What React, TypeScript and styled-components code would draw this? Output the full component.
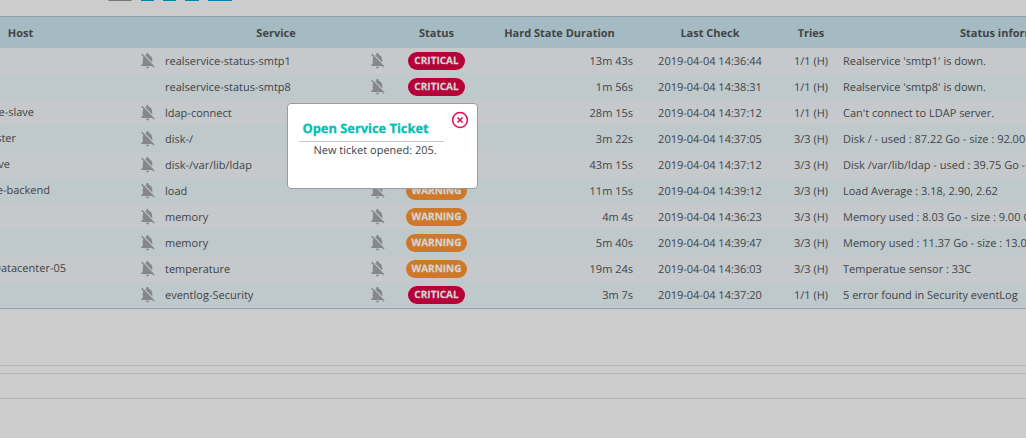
import React from "react";
import styled, { createGlobalStyle } from "styled-components";

const GlobalStyle = createGlobalStyle`
  * { box-sizing: border-box; }
  body {
    margin: 0;
    background: #cccccc;
    font-family: "Open Sans", sans-serif;
    font-size: 11px;
    color: #424446;
    overflow: hidden;
    text-rendering: geometricPrecision;
  }
`;

const Page = styled.div`
  width: 1026px;
  height: 438px;
  overflow: hidden;
`;

const LogoStrip = styled.div`
  height: 16px;
  padding-left: 107.5px;
`;

const Table = styled.div`
  border-top: 1px solid #8ea3b1;
  border-bottom: 1px solid #8ea3b4;
`;

const Row = styled.div`
  display: grid;
  grid-template-columns: 138px 20px 236px 85px 161px 140px 62px 1fr;
  align-items: center;
  height: 26px;
  background: #c5c9cc;
  white-space: nowrap;
  &:nth-child(odd) { background: #bfc8cb; }
`;

const HeaderRow = styled(Row)`
  height: 31px;
  padding-top: 1px;
  font-weight: 700;
  text-align: center;
  &:nth-child(odd) { background: #a4bbc3; }
`;

const HostHeader = styled.span`
  width: 41px;
`;

const InfoHeader = styled.span`
  padding-left: 118px;
  text-align: left;
`;

const Cell = styled.span`
  padding-top: 1px;
  line-height: 15px;
`;

const HostCell = styled(Cell)<{ $width: number }>`
  display: flex;
  justify-content: flex-end;
  width: ${(p) => p.$width}px;
  padding: 0 0 1px;
  overflow: hidden;
`;

const BellSvg = styled.svg`
  display: block;
  width: 19px;
  height: 19px;
  margin-bottom: 1px;
  fill: #85878a;
`;

const ServiceCell = styled.span`
  display: flex;
  align-items: center;
  justify-content: space-between;
  padding: 0 7px;
`;

const Badge = styled.span<{ $level: Level }>`
  justify-self: center;
  width: ${(p) => (p.$level === "CRITICAL" ? 57 : 61)}px;
  height: 18px;
  border-radius: 9px;
  background: ${(p) => (p.$level === "CRITICAL" ? "#b70039" : "#cf7829")};
  color: #d4d4d4;
  font-size: 10px;
  font-weight: 700;
  line-height: 17px;
  text-align: center;
  -webkit-text-stroke: 0.25px #d4d4d4;
`;

const Duration = styled(Cell)`
  padding-right: 7px;
  text-align: right;
`;

const Centered = styled(Cell)`
  text-align: center;
`;

const Info = styled(Cell)`
  padding-left: 1px;
  overflow: hidden;
`;

const FooterBar = styled.div<{ $gap: number }>`
  height: ${(p) => p.$gap}px;
  border-bottom: 1px solid #b7b7b7;
`;

const Modal = styled.div`
  position: absolute;
  left: 287px;
  top: 103px;
  width: 191px;
  height: 86px;
  display: flex;
  justify-content: space-between;
  padding: 15px 8px 0 11px;
  border: 1px solid #999b9d;
  border-radius: 4px;
  background: #ffffff;
`;

const ModalBody = styled.div`
  width: 145px;
`;

const ModalTitle = styled.h3`
  margin: 0;
  height: 23px;
  padding-left: 3.5px;
  border-bottom: 1px solid #c8c8c8;
  color: #00bfb3;
  font-size: 12.85px;
  font-weight: 700;
  line-height: 19px;
  white-space: nowrap;
  -webkit-text-stroke: 0.25px #00bfb3;
`;

const ModalText = styled.p`
  margin: 0;
  padding-left: 14.5px;
  line-height: 18px;
  white-space: nowrap;
`;

const CloseIcon = styled.svg`
  margin-top: -8px;
  width: 18px;
  height: 18px;
`;

type Level = "CRITICAL" | "WARNING";

interface Entry {
  host?: string;
  hostWidth?: number;
  muted?: boolean;
  service: string;
  level: Level;
  duration: string;
  check: string;
  tries: string;
  info: string;
}

const entries: Entry[] = [
  { muted: true, service: "realservice-status-smtp1", level: "CRITICAL", duration: "13m 43s", check: "14:36:44", tries: "1/1 (H)", info: "Realservice 'smtp1' is down." },
  { service: "realservice-status-smtp8", level: "CRITICAL", duration: "1m 56s", check: "14:38:31", tries: "1/1 (H)", info: "Realservice 'smtp8' is down." },
  { host: "e-slave", hostWidth: 34, muted: true, service: "ldap-connect", level: "CRITICAL", duration: "28m 15s", check: "14:37:12", tries: "1/1 (H)", info: "Can't connect to LDAP server." },
  { host: "ster", hostWidth: 16, muted: true, service: "disk-/", level: "WARNING", duration: "3m 22s", check: "14:37:05", tries: "3/3 (H)", info: "Disk / - used : 87.22 Go - size : 92.00" },
  { host: "ve", hostWidth: 10, muted: true, service: "disk-/var/lib/ldap", level: "WARNING", duration: "43m 15s", check: "14:37:12", tries: "3/3 (H)", info: "Disk /var/lib/ldap - used : 39.75 Go -" },
  { host: "e-backend", hostWidth: 50, muted: true, service: "load", level: "WARNING", duration: "11m 15s", check: "14:39:12", tries: "3/3 (H)", info: "Load Average : 3.18, 2.90, 2.62" },
  { muted: true, service: "memory", level: "WARNING", duration: "4m 4s", check: "14:36:23", tries: "3/3 (H)", info: "Memory used : 8.03 Go - size : 9.00 Go" },
  { muted: true, service: "memory", level: "WARNING", duration: "5m 40s", check: "14:39:47", tries: "3/3 (H)", info: "Memory used : 11.37 Go - size : 13.0" },
  { host: "Datacenter-05", hostWidth: 66, muted: true, service: "temperature", level: "WARNING", duration: "19m 24s", check: "14:36:03", tries: "3/3 (H)", info: "Temperatue sensor : 33C" },
  { muted: true, service: "eventlog-Security", level: "CRITICAL", duration: "3m 7s", check: "14:37:20", tries: "1/1 (H)", info: "5 error found in Security eventLog" },
];

function MutedIcon() {
  return (
    <BellSvg viewBox="0 0 24 24">
      <path d="M20 18.69L7.84 6.14 5.27 3.49 4 4.76l2.8 2.8v.01c-.52.99-.8 2.16-.8 3.42v5l-2 2v1h13.73l2 2L21 19.72l-1-1.03zM12 22c1.11 0 2-.89 2-2h-4c0 1.11.89 2 2 2zm6-7.32V11c0-3.08-1.64-5.64-4.5-6.32V4c0-.83-.67-1.5-1.5-1.5s-1.5.67-1.5 1.5v.68c-.15.03-.29.08-.42.12-.1.03-.2.07-.3.11h-.01c-.01 0-.01 0-.02.01-.23.09-.46.2-.68.31 0 0-.01 0-.01.01L18 14.68z" />
    </BellSvg>
  );
}

export default function App() {
  return (
    <Page>
      <GlobalStyle />
      <LogoStrip>
        <svg width="125" height="2" viewBox="0 0 125 2" display="block">
          <path d="M0 0H24L23 1H1Z" fill="#777475" />
          <path d="M33 0h13v1h-13zM55 0h13v1h-13zM77 0h14v1h-14zM100 0h24v1h-24z" fill="#0082b2" />
        </svg>
      </LogoStrip>
      <Table>
        <HeaderRow>
          <HostHeader>Host</HostHeader>
          <span />
          <span>Service</span>
          <span>Status</span>
          <span>Hard State Duration</span>
          <span>Last Check</span>
          <span>Tries</span>
          <InfoHeader>Status information</InfoHeader>
        </HeaderRow>
        {entries.map((e) => (
          <Row key={e.check + e.service}>
            <HostCell $width={e.hostWidth ?? 0}>{e.host}</HostCell>
            <span>{e.muted && <MutedIcon />}</span>
            <ServiceCell>
              <Cell>{e.service}</Cell>
              <MutedIcon />
            </ServiceCell>
            <Badge $level={e.level}>{e.level}</Badge>
            <Duration>{e.duration}</Duration>
            <Centered>2019-04-04 {e.check}</Centered>
            <Centered>{e.tries}</Centered>
            <Info>{e.info}</Info>
          </Row>
        ))}
      </Table>
      <FooterBar $gap={57} />
      <FooterBar $gap={8} />
      <FooterBar $gap={25} />
      <Modal>
        <ModalBody>
          <ModalTitle>Open Service Ticket</ModalTitle>
          <ModalText>New ticket opened: 205.</ModalText>
        </ModalBody>
        <CloseIcon viewBox="0 0 18 18" fill="none" stroke="#e00b52">
          <circle cx="9" cy="9" r="7.4" strokeWidth="1.5" />
          <path d="M6.5 6.5l5 5M11.5 6.5l-5 5" strokeWidth="1.6" />
        </CloseIcon>
      </Modal>
    </Page>
  );
}
